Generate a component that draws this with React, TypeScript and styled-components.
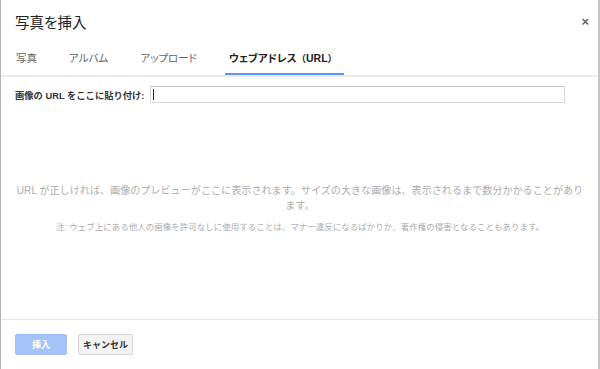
import React from "react";
import styled, { createGlobalStyle } from "styled-components";

const Global = createGlobalStyle`
  html, body { margin: 0; padding: 0; background: #fff; }
  body { font-family: "Liberation Sans", "Noto Sans CJK JP", sans-serif; }
  * { box-sizing: border-box; }
`;

const Dialog = styled.div`
  width: 600px;
  height: 369px;
  overflow: hidden;
  display: flex;
  flex-direction: column;
  background: #fff;
  border-left: 1px solid #b5b5b5;
  border-right: 2px solid #c6c6c6;
`;

const Header = styled.div`
  height: 42px;
  display: flex;
  align-items: center;
  justify-content: space-between;
  padding: 0 9px 0 14px;
`;

const Title = styled.div`
  font-size: 14.5px;
  color: #222;
  font-feature-settings: "palt";
`;

const Close = styled.div`
  font-size: 13px;
  color: #666;
  font-weight: bold;
  line-height: 1;
`;

const TabBar = styled.div`
  display: flex;
  gap: 24px;
  padding-left: 11px;
  border-bottom: 2px solid #ececec;
`;

const Tab = styled.div<{ $active?: boolean }>`
  height: 33px;
  padding: 0 ${(p) => (p.$active ? "7px" : "4px")} 0 4px;
  display: flex;
  align-items: center;
  font-size: 10.5px;
  color: ${(p) => (p.$active ? "#222" : "#666")};
  font-weight: ${(p) => (p.$active ? "bold" : "normal")};
  border-bottom: 2px solid ${(p) => (p.$active ? "#5f95ef" : "transparent")};
  font-feature-settings: "palt";
`;

const Paren = styled.span`
  font-feature-settings: normal;
  font-size: 9.5px;
`;

const Content = styled.div`
  flex: 1;
  display: flex;
  flex-direction: column;
  padding: 9px 33px 0 14px;
`;

const LabelRow = styled.div`
  display: flex;
  align-items: center;
  gap: 6px;
`;

const Label = styled.label`
  font-size: 9.3px;
  font-weight: bold;
  color: #333;
  white-space: nowrap;
`;

const InputWrap = styled.div`
  position: relative;
  flex: 1;
`;

const UrlInput = styled.input`
  display: block;
  width: 100%;
  height: 17px;
  border: 1px solid #d9d9d9;
  border-top-color: #c4c4c4;
  outline: none;
  padding: 0 4px;
  font-size: 10px;
`;

const Caret = styled.span`
  position: absolute;
  left: 3px;
  top: 3px;
  width: 1px;
  height: 11px;
  background: #222;
`;

const Preview = styled.div`
  flex: 1;
  display: flex;
  flex-direction: column;
  align-items: center;
  justify-content: center;
  text-align: center;
  padding: 0 0 6px 2px;
  margin-right: -18px;
  color: #adadad;
`;

const Message = styled.p`
  margin: 0;
  font-size: 10.1px;
  line-height: 15px;
  white-space: nowrap;
`;

const Note = styled.p`
  margin: 8px 0 0;
  font-size: 8.5px;
  line-height: 12px;
  white-space: nowrap;
`;

const Footer = styled.div`
  border-top: 1px solid #e6e6e6;
  height: 50px;
  padding: 14px 14px 0;
  display: flex;
  align-items: flex-start;
  gap: 11px;
`;

const Button = styled.button<{ $primary?: boolean }>`
  height: 21px;
  min-width: 52px;
  padding: 0 4px;
  font-family: inherit;
  font-size: 9px;
  font-weight: bold;
  border-radius: 2px;
  border: 1px solid ${(p) => (p.$primary ? "#9ebcf3" : "#d6d6d6")};
  background: ${(p) => (p.$primary ? "#a5c3f8" : "#f3f3f3")};
  color: ${(p) => (p.$primary ? "#fff" : "#333")};
`;

export default function App() {
  return (
    <>
      <Global />
      <Dialog>
        <Header>
          <Title>写真を挿入</Title>
          <Close>×</Close>
        </Header>
        <TabBar>
          <Tab>写真</Tab>
          <Tab>アルバム</Tab>
          <Tab>アップロード</Tab>
          <Tab $active>
            ウェブアドレス<Paren>（</Paren>URL<Paren>）</Paren>
          </Tab>
        </TabBar>
        <Content>
          <LabelRow>
            <Label>画像の URL をここに貼り付け:</Label>
            <InputWrap>
              <UrlInput />
              <Caret />
            </InputWrap>
          </LabelRow>
          <Preview>
            <Message>
              URL が正しければ、画像のプレビューがここに表示されます。サイズの大きな画像は、表示されるまで数分かかることがあり
              <br />
              ます。
            </Message>
            <Note>
              注: ウェブ上にある他人の画像を許可なしに使用することは、マナー違反になるばかりか、著作権の侵害となることもあります。
            </Note>
          </Preview>
        </Content>
        <Footer>
          <Button $primary disabled>挿入</Button>
          <Button>キャンセル</Button>
        </Footer>
      </Dialog>
    </>
  );
}
